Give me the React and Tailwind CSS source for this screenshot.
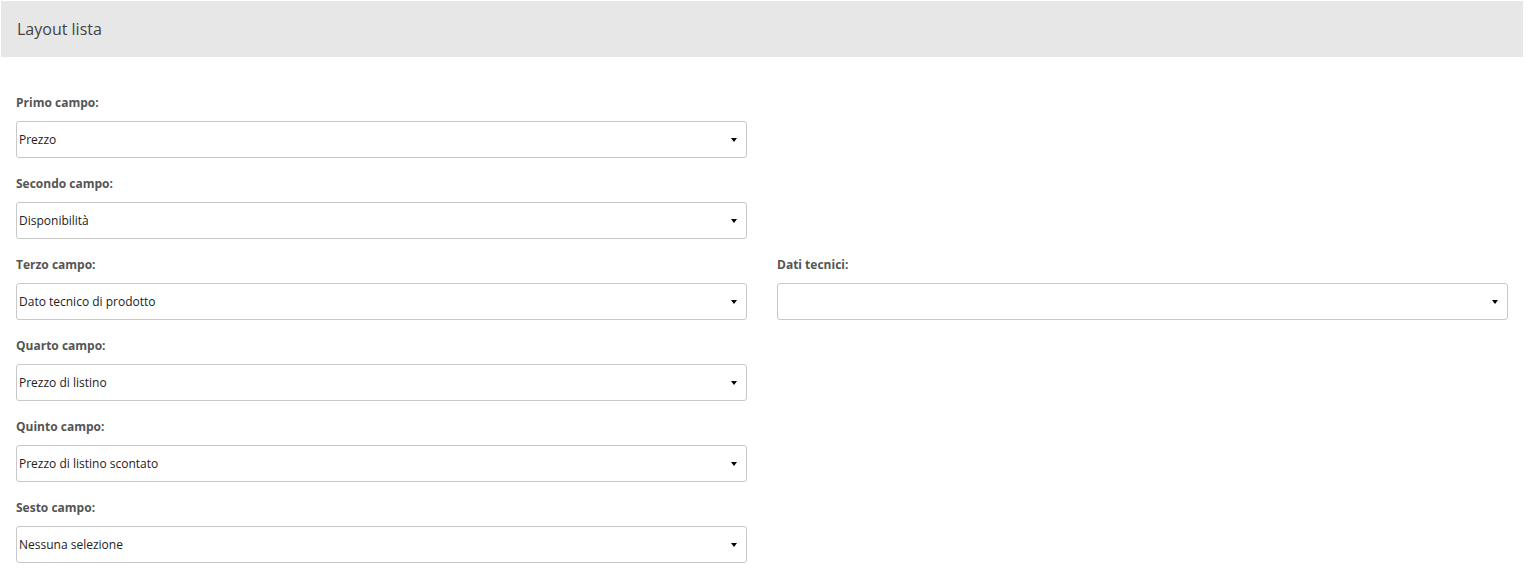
import React from "react";

const fields = [
  { label: "Primo campo:", value: "Prezzo" },
  { label: "Secondo campo:", value: "Disponibilità" },
  { label: "Terzo campo:", value: "Dato tecnico di prodotto", extra: { label: "Dati tecnici:", value: "" } },
  { label: "Quarto campo:", value: "Prezzo di listino" },
  { label: "Quinto campo:", value: "Prezzo di listino scontato" },
  { label: "Sesto campo:", value: "Nessuna selezione" },
];

function Select({ label, value }) {
  return (
    <div className="flex flex-col">
      <div className="h-[26px] text-[12px] font-bold leading-[16px] text-[#555]">{label}</div>
      <div className="flex h-[37px] items-center justify-between rounded-[3px] border border-[#c8c8c8] bg-white pl-[2px] pr-[9px]">
        <span className="text-[12px] text-[#222]">{value}</span>
        <span className="h-0 w-0 border-x-[3px] border-t-[4px] border-x-transparent border-t-black" />
      </div>
    </div>
  );
}

export default function App() {
  return (
    <div className="min-h-[572px] w-[1530px] bg-white pt-px font-['Open_Sans',sans-serif]">
      <div className="ml-px flex h-[56px] w-[1522px] items-center bg-[#e7e7e7] px-4 text-[16px] text-[#444]">
        Layout lista
      </div>
      <div className="flex flex-col gap-[18px] pl-4 pt-[38px]">
        {fields.map((f) => (
          <div key={f.label} className="grid grid-cols-[731px_731px] gap-x-[30px]">
            <Select label={f.label} value={f.value} />
            {f.extra && <Select label={f.extra.label} value={f.extra.value} />}
          </div>
        ))}
      </div>
    </div>
  );
}
